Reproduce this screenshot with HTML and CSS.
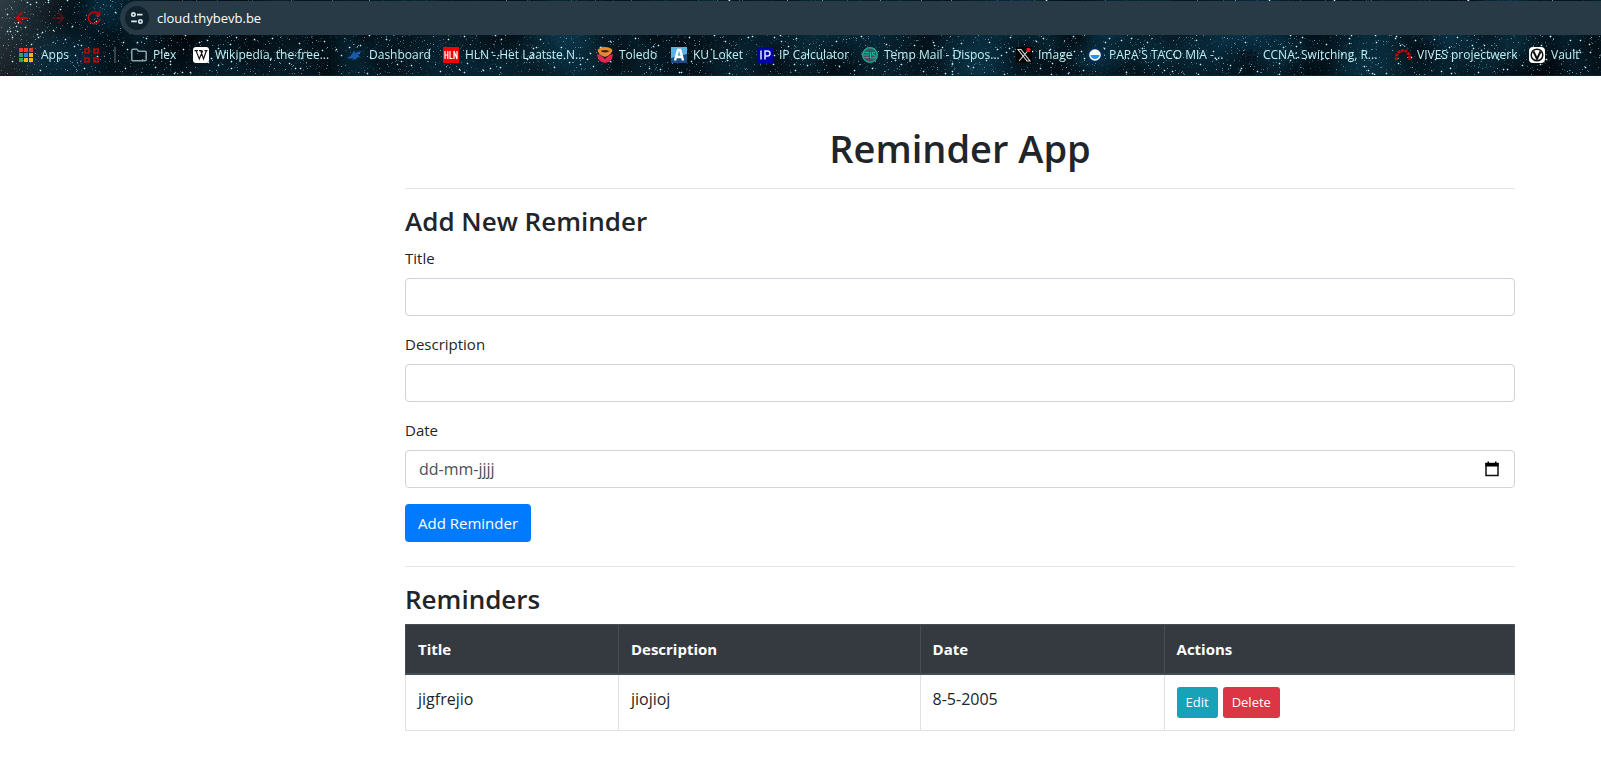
FILE: index.html
```html
<!DOCTYPE html>
<html lang="en">
<head>
<meta charset="utf-8">
<title>Reminder App</title>
<link rel="stylesheet" href="styles.css">
</head>
<body>
<header class="chrome">
  <canvas class="stars" id="stars" aria-hidden="true"></canvas>
  <div class="toolbar">
    <button class="nav" type="button" aria-label="Back"><svg width="16" height="16" viewBox="0 0 16 16"><path d="M14 8H3M8 2.5L2.5 8L8 13.5" fill="none" stroke="#b80808" stroke-width="1.8"/></svg></button>
    <button class="nav" type="button" aria-label="Forward"><svg width="16" height="16" viewBox="0 0 16 16"><path d="M2 8H13M8 2.5L13.5 8L8 13.5" fill="none" stroke="#5c1017" stroke-width="1.7"/></svg></button>
    <button class="nav" type="button" aria-label="Reload"><svg width="16" height="16" viewBox="0 0 16 16"><path d="M12.7 4.5A5.700 5.700 0 1 0 13.700 8.800M13.500 1.500V5.300H9.500" fill="none" stroke="#b80808" stroke-width="1.800"/></svg></button>
    <div class="address">
      <button class="site" type="button" aria-label="Site information"><svg width="14" height="14" viewBox="0 0 14 14"><g fill="none" stroke="#dfe9ec" stroke-width="1.6"><circle cx="3.4" cy="3.6" r="1.7"/><path d="M7 3.6H12.5M1.2 10.4H6.8"/><circle cx="10.4" cy="10.4" r="1.7"/></g></svg></button>
      <input class="url" type="text" aria-label="Address" value="cloud.thybevb.be">
    </div>
  </div>
  <nav class="bookmarks" aria-label="Bookmarks">
    <a href="#"><svg width="16" height="16" viewBox="0 0 16 16"><path fill="#ee3a2e" d="M0 1h4v4H0zM5 1h4v4H5zM10 1h4v4h-4z"/><path fill="#35a152" d="M0 6h4v4H0zM0 11h4v4H0z"/><path fill="#2f7de9" d="M5 6h4v4H5z"/><path fill="#f9b50b" d="M10 6h4v4h-4zM5 11h4v4H5zM10 11h4v4h-4z"/></svg><span>Apps</span></a>
    <a href="#" aria-label="Tab groups"><svg width="16" height="16" viewBox="0 0 16 16"><path d="M1 2h4v4H1zM10 2h4v4h-4zM1 11h4v4H1zM10 11h4v4h-4z" fill="none" stroke="#b80808" stroke-width="1.700"/></svg></a>
    <span class="divider"></span>
    <a href="#"><svg width="16" height="16" viewBox="0 0 16 16"><path d="M.8 3.2q0-1 1-1h4l1.8 2h6.600q1 0 1 1v7.600q0 1-1 1H1.800q-1 0-1-1z" fill="none" stroke="#8da5a9" stroke-width="1.5"/></svg><span>Plex</span></a>
    <a href="#"><svg width="16" height="16" viewBox="0 0 16 16"><rect width="16" height="16" rx="3" fill="#fff"/><path d="M1.500 3.600H5M6 3.600H9.500M11.500 3.600H14.500M3 3.600L6.300 12L9.600 4M7.700 3.600L10.500 12L13.400 3.800" fill="none" stroke="#171717" stroke-width="1.200"/></svg><span>Wikipedia, the free...</span></a>
    <a href="#"><svg width="16" height="16" viewBox="0 0 16 16"><path d="M0 11Q4 9.500 5 7Q6 4 8 3.500Q7.500 5.500 8.500 6.500Q10.500 3.500 15 4.500Q12 5.500 11.500 7.500Q11.500 9.500 14 10.500Q11 9.500 9 11.500Q7 13 4.500 12.500Q6 12 6.500 11Q3 12 0 11Z" fill="#1a59ab"/></svg><span>Dashboard</span></a>
    <a href="#"><svg width="16" height="16" viewBox="0 0 16 16"><rect width="16" height="16" fill="#f40000"/><path d="M2 4v8M4.800 4v8M2 8h3M7 4v7.500h2.500M11 12V4L14 12V4" fill="none" stroke="#fff" stroke-width="1.200"/></svg><span>HLN - Het Laatste N...</span></a>
    <a href="#"><svg width="16" height="16" viewBox="0 0 16 16"><path d="M8 0Q13 0 15.500 3Q15 7.500 8 10Q1 7.500.5 3Q3 0 8 0Z" fill="#ee8a2b"/><path d="M3.500 4Q8 2 12.500 4Q8 7 3.500 4Z" fill="#352b28"/><path d="M0 7Q4 7.500 8 12Q12 7.500 16 7L15 12Q12 15.500 8 16Q4 15.500 1 12Z" fill="#df2752"/></svg><span>Toledo</span></a>
    <a href="#"><svg width="16" height="16" viewBox="0 0 16 16"><rect width="16" height="16" fill="#1b4c82"/><path d="M0 0h16v7L0 11z" fill="#58b3e5"/><path d="M4 13.500L7 3h2.200L12 13.500M5.300 10h5.500" fill="none" stroke="#fff" stroke-width="2.400"/></svg><span>KU Loket</span></a>
    <a href="#"><svg width="16" height="16" viewBox="0 0 16 16"><rect width="16" height="16" rx="1" fill="#0302a9"/><path d="M4 3.500v9M8 12.500V4h2.500a2.300 2.300 0 0 1 0 5H8" fill="none" stroke="#dce5ff" stroke-width="1.500"/></svg><span>IP Calculator</span></a>
    <a href="#"><svg width="16" height="16" viewBox="0 0 16 16"><circle cx="8" cy="8" r="7.300" fill="#454f60" stroke="#19b899" stroke-width="1.300"/><path d="M2.500 5.500H7M2 8h5M2.500 10.500H7M8.500 5v6H13V8H10.500V5.500H13" fill="none" stroke="#19b899"/></svg><span>Temp Mail - Dispos...</span></a>
    <a href="#"><svg width="16" height="16" viewBox="0 0 16 16"><rect width="16" height="16" fill="#050505"/><path d="M2 2.500h3L14 14h-3zM13 2.500L3 14" fill="none" stroke="#dadada" stroke-width="1.100"/><circle cx="12.500" cy="3" r="2.300" fill="#f01824"/></svg><span>Image</span></a>
    <a href="#"><svg width="16" height="16" viewBox="0 0 16 16"><circle cx="8" cy="8" r="8" fill="#092b52"/><circle cx="8" cy="8" r="5.800" fill="#fff"/><path d="M3.500 8h9a4.500 4 0 0 1-9 0z" fill="#2196ee"/></svg><span>PAPA'S TACO MIA -...</span></a>
    <a href="#"><svg width="16" height="16" viewBox="0 0 16 16"><path d="M1 5v2M4 3v4M7 5v2M10 3v4M14 5v2M1 10h3M6 10h4M12 10h3M1 13h3M6 13h4M12 13h3" stroke="#050e14" stroke-width="1.500"/></svg><span>CCNA: Switching, R...</span></a>
    <a href="#"><svg width="16" height="16" viewBox="0 0 16 16"><path d="M1.500 13V10A6.500 6.500 0 0 1 14.500 10V13" fill="none" stroke="#bd0710" stroke-width="3" stroke-dasharray="2.800 .8"/></svg><span>VIVES projectwerk</span></a>
    <a href="#"><svg width="16" height="16" viewBox="0 0 16 16"><rect width="16" height="16" rx="4" fill="#fff"/><circle cx="8" cy="8" r="5.800" fill="none" stroke="#111" stroke-width="1.500"/><path d="M4.500 4.500L8 12L11.500 4.500" fill="none" stroke="#111" stroke-width="2"/></svg><span>Vault</span></a>
  </nav>
</header>
<main class="container">
  <h1>Reminder App</h1>
  <hr>
  <h2>Add New Reminder</h2>
  <form>
    <div class="group"><label for="title">Title</label><input class="control" id="title" type="text"></div>
    <div class="group"><label for="description">Description</label><input class="control" id="description" type="text"></div>
    <div class="group"><label for="date">Date</label>
      <div class="control date-field"><input id="date" type="text" placeholder="dd-mm-jjjj"><button type="button" aria-label="Choose date"><svg width="14" height="16" viewBox="0 0 14 16"><path d="M1 2.500h12v12H1z" fill="none" stroke="#111" stroke-width="1.500"/><path d="M.5 2h13v3.500H.5zM2.500.5h1.500v2H2.500zM10 .5h1.500v2H10z" fill="#000"/></svg></button></div>
    </div>
    <button class="btn primary" type="submit">Add Reminder</button>
  </form>
  <hr class="spaced">
  <h2>Reminders</h2>
  <table>
    <colgroup><col class="c-title"><col class="c-description"><col class="c-date"><col></colgroup>
    <thead><tr><th scope="col">Title</th><th scope="col">Description</th><th scope="col">Date</th><th scope="col">Actions</th></tr></thead>
    <tbody><tr><td>jigfrejio</td><td>jiojioj</td><td>8-5-2005</td><td><div class="actions"><button class="btn small info" type="button">Edit</button><button class="btn small danger" type="button">Delete</button></div></td></tr></tbody>
  </table>
</main>
<script src="stars.js"></script>
</body>
</html>
```

FILE: styles.css
```css
* { box-sizing: border-box; }
body { margin: 0; background: #fff; color: #212529; font: 15px/24px "Open Sans", "Noto Sans", sans-serif; }
button, input { font: inherit; color: inherit; margin: 0; }
svg { display: block; flex: none; }

/* Browser bar */
.chrome { position: relative; height: 76px; background: #04141d; border-bottom: 1px solid #32102a; overflow: hidden; }
.stars { position: absolute; inset: 0; width: 100%; height: 100%; }
.toolbar { position: relative; display: flex; align-items: center; height: 35px; padding: 1px 0 0 14px; }
.nav { width: 36px; padding: 0; border: 0; background: none; display: flex; }
.address { flex: 1; display: flex; align-items: center; gap: 8px; height: 34px; margin-left: -2px; padding-left: 5px; border-radius: 17px 0 0 17px; background: #273a45; }
.site { display: flex; align-items: center; justify-content: center; width: 24px; height: 24px; padding: 0; border: 0; border-radius: 50%; background: #10232d; }
.url { flex: 1; padding: 0; border: 0; outline: 0; background: none; color: #fff; font-size: 13px; line-height: 20px; }
.bookmarks { position: relative; display: grid; grid-template-columns: 65px 30px 17px 62px 154px 96px 154px 74px 86px 105px 154px 71px 154px 154px 134px 72px; align-items: center; height: 40px; padding-left: 19px; }
.bookmarks a { display: flex; align-items: center; gap: 6px; color: #bdf0f4; font-size: 12px; line-height: 16px; text-decoration: none; white-space: nowrap; }
.divider { width: 2px; height: 16px; background: #35434d; }

/* Page */
.container { max-width: 1140px; margin: 0 0 0 390px; padding: 48px 15px 32px; }
h1, h2 { margin: 0 0 8px; font-weight: 600; }
h1 { font-size: 38px; line-height: 48px; text-align: center; }
h2 { font-size: 26px; line-height: 33px; }
hr { margin: 16px 0; border: 0; border-top: 1px solid #e5e5e5; }
hr.spaced { margin-top: 24px; }
.group { margin-bottom: 16px; }
label { display: block; margin-bottom: 8px; }
.control { display: block; width: 100%; height: 38px; padding: 6px 12px; border: 1px solid #ced4da; border-radius: 4px; background: #fff; color: #495057; font-size: 16px; }
.date-field { display: flex; align-items: center; padding: 6px 15px 6px 13px; }
.date-field input { flex: 1; padding: 0; border: 0; outline: 0; }
.date-field input::placeholder { color: #495057; opacity: 1; }
.date-field button { padding: 0; border: 0; background: none; }
.btn { display: block; padding: 7px 13px; border: 0; border-radius: 4px; color: #fff; white-space: nowrap; }
.primary { background: #007bff; }
.small { padding: 5px 9px; border-radius: 3px; font-size: 13px; line-height: 21px; }
.info { background: #17a2b8; }
.danger { background: #dc3545; }
table { width: 100%; table-layout: fixed; border-collapse: collapse; }
.c-title { width: 19.2%; }
.c-description { width: 27.2%; }
.c-date { width: 22%; }
th, td { padding: 12px; border: 1px solid #dee2e6; text-align: left; vertical-align: top; }
th { background: #343a40; border-color: #454d55; border-bottom-width: 2px; color: #fff; font-weight: 700; }
td { font-size: 16px; }
.actions { display: flex; gap: 5px; }
```

FILE: stars.js
```js
// Night-sky backdrop, seeded so that every load draws the same stars.
(function () {
  var canvas = document.getElementById('stars');
  var w = canvas.width = canvas.offsetWidth;
  var h = canvas.height = canvas.offsetHeight;
  var ctx = canvas.getContext('2d');
  var seed = 4711;
  function rnd() {
    seed = (seed * 16807) % 2147483647;
    return seed / 2147483647;
  }
  var tints = ['10,62,84', '8,48,70', '0,0,2', '14,50,66', '0,2,6'];
  for (var i = 0; i < w / 9; i++) {
    var x = rnd() * w, y = rnd() * h, r = 18 + rnd() * 36;
    var tint = tints[Math.floor(rnd() * tints.length)];
    var g = ctx.createRadialGradient(x, y, 0, x, y, r);
    g.addColorStop(0, 'rgba(' + tint + ',0.5)');
    g.addColorStop(1, 'rgba(' + tint + ',0)');
    ctx.fillStyle = g;
    ctx.fillRect(x - r, y - r, r * 2, r * 2);
  }
  var haze = ctx.createLinearGradient(0, 0, 70, 30);
  haze.addColorStop(0, 'rgba(90,100,105,0.5)');
  haze.addColorStop(1, 'rgba(90,100,105,0)');
  ctx.fillStyle = haze;
  ctx.fillRect(0, 0, 110, h);
  for (i = 0; i < w * h / 14; i++) {
    var a = Math.pow(rnd(), 3) * 0.75 + 0.1;
    ctx.fillStyle = 'rgba(140,195,215,' + a + ')';
    ctx.fillRect(Math.floor(rnd() * w), Math.floor(rnd() * h), 1, 1);
  }
  for (i = 0; i < w * h / 230; i++) {
    var sx = Math.floor(rnd() * w), sy = Math.floor(rnd() * h);
    ctx.fillStyle = 'rgba(120,175,195,0.4)';
    ctx.fillRect(sx - 1, sy, 3, 1);
    ctx.fillRect(sx, sy - 1, 1, 3);
    ctx.fillStyle = 'rgba(215,240,245,0.95)';
    ctx.fillRect(sx, sy, 1, 1);
  }
})();
```
